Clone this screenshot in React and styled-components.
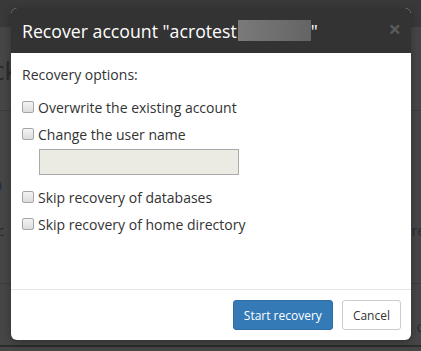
import React from "react";
import styled, { createGlobalStyle } from "styled-components";

const GlobalStyle = createGlobalStyle`
  html, body {
    margin: 0;
    padding: 0;
    width: 421px;
    height: 351px;
    overflow: hidden;
    font-family: "Open Sans", "Liberation Sans", sans-serif;
  }
`;

const Page = styled.div`
  position: relative;
  width: 421px;
  height: 351px;
  background: #464646;
  overflow: hidden;
`;

const NavBar = styled.div`
  height: 27px;
  background: #393939;
`;

const PageHeading = styled.div`
  height: 83px;
  border-bottom: 1px solid #3c3c3c;
  font-size: 26px;
  line-height: 86px;
  color: #2a2a2a;
  margin-left: -46px;
`;

const Section = styled.div`
  height: ${(p) => p.h}px;
  box-sizing: border-box;
  padding-top: ${(p) => p.pad}px;
  border-bottom: ${(p) => (p.line ? "1px solid #3c3c3c" : "none")};
`;

const PageLine = styled.div`
  height: 45px;
  line-height: 45px;
  font-size: 14px;
  color: #1f2d3d;
  margin: 0 -4px 0 ${(p) => p.shift}px;
  display: flex;
  justify-content: space-between;
`;

const BottomLine = styled.div`
  position: absolute;
  left: 0;
  right: 0;
  bottom: 4px;
  height: 2px;
  background: #2c2c2c;
`;

const Modal = styled.div`
  position: absolute;
  left: 11px;
  top: 8px;
  width: 400px;
  height: 332px;
  background: #fff;
  border-radius: 6px;
  overflow: hidden;
  display: flex;
  flex-direction: column;
  box-shadow: 0 3px 9px rgba(0, 0, 0, 0.3);
`;

const Header = styled.div`
  height: 45px;
  background: #333;
  display: flex;
  align-items: center;
  padding: 0 11px;
  box-sizing: border-box;
  justify-content: space-between;
`;

const Title = styled.h4`
  margin: 0;
  font-size: 17.7px;
  font-weight: 400;
  color: #fff;
  display: flex;
  align-items: center;
  white-space: nowrap;
`;

const Blur = styled.span`
  display: inline-block;
  width: 73px;
  height: 21px;
  margin-left: 1px;
  background: linear-gradient(90deg, #7a7a7a, #6f6f6f 50%, #646464);
`;

const Close = styled.span`
  font-size: 22px;
  font-weight: 700;
  color: #5a5a5a;
  line-height: 1;
  margin-top: -6px;
  margin-right: -1px;
`;

const Body = styled.div`
  flex: 1;
  padding: 12px 11px 0;
  color: #333;
  font-size: 14px;
`;

const Label = styled.div`
  height: 20px;
  line-height: 20px;
  margin-bottom: 12px;
`;

const Option = styled.label`
  display: flex;
  align-items: center;
  height: 20px;
  margin-bottom: 7px;
  gap: 4px;
`;

const Check = styled.input`
  appearance: none;
  margin: 0;
  width: 12px;
  height: 12px;
  border: 1px solid #a6a6a6;
  border-radius: 2px;
  background: linear-gradient(#f4f4f4, #dcdcdc);
  box-sizing: border-box;
`;

const NameInput = styled.input`
  display: block;
  margin: -2px 0 12px 17px;
  width: 200px;
  height: 26px;
  box-sizing: border-box;
  border: 1px solid #a9a9a9;
  background: #ebebe4;
`;

const Footer = styled.div`
  height: 51px;
  border-top: 1px solid #e5e5e5;
  display: flex;
  justify-content: flex-end;
  align-items: flex-start;
  padding: 10px 10px 0;
  gap: 9px;
  box-sizing: border-box;
`;

const Button = styled.button`
  height: 30px;
  padding: 0 10px;
  font-family: inherit;
  font-size: 12px;
  border-radius: 3px;
  border: 1px solid ${(p) => (p.primary ? "#2e6da4" : "#ccc")};
  background: ${(p) => (p.primary ? "#337ab7" : "#fff")};
  color: ${(p) => (p.primary ? "#fff" : "#333")};
`;

const options = [
  "Overwrite the existing account",
  "Change the user name",
  "Skip recovery of databases",
  "Skip recovery of home directory",
];

export default function App() {
  return (
    <>
      <GlobalStyle />
      <Page>
        <NavBar />
        <PageHeading>Stack</PageHeading>
        <Section h={173} pad={52} line>
          <PageLine shift={-6}>
            <span>0</span>
          </PageLine>
          <PageLine shift={-10}>
            <span>ac</span>
            <span>re</span>
          </PageLine>
        </Section>
        <Section h={60} pad={20}>
          <PageLine shift={0}>
            <span />
            <span>o</span>
          </PageLine>
        </Section>
        <BottomLine />
        <Modal>
          <Header>
            <Title>
              Recover account "acrotest<Blur />"
            </Title>
            <Close>×</Close>
          </Header>
          <Body>
            <Label>Recovery options:</Label>
            {options.map((text, i) => (
              <React.Fragment key={text}>
                <Option>
                  <Check type="checkbox" />
                  {text}
                </Option>
                {i === 1 && <NameInput disabled />}
              </React.Fragment>
            ))}
          </Body>
          <Footer>
            <Button primary>Start recovery</Button>
            <Button>Cancel</Button>
          </Footer>
        </Modal>
      </Page>
    </>
  );
}
